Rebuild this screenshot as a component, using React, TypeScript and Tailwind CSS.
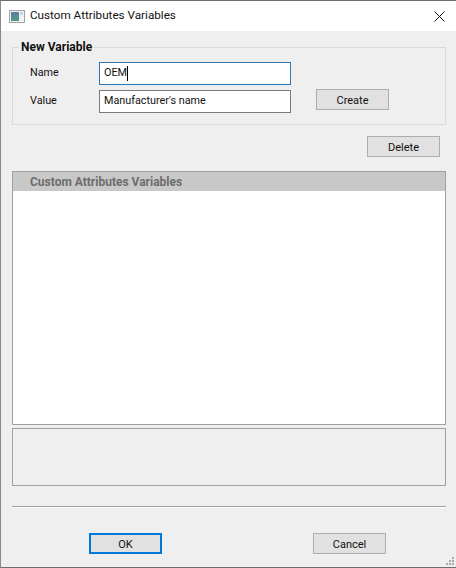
const font = "font-['Roboto','Noto_Sans',sans-serif]";

function Button({ label, primary, className = "" }: { label: string; primary?: boolean; className?: string }) {
  return (
    <button className={`w-[73px] h-[21px] flex items-center justify-center pt-[3px] bg-[#e1e1e1] text-[11px] text-[#111] ${primary ? "border-2 border-[#0078d7]" : "border border-[#adadad]"} ${className}`}>
      {label}
    </button>
  );
}

function Field({ label, value, focused }: { label: string; value: string; focused?: boolean }) {
  return (
    <div className="flex items-center h-[23px]">
      <span className="w-[69px] text-[10.8px] text-[#111]">{label}</span>
      <div className={`w-[192px] h-[23px] bg-white border flex items-center pl-[4px] pb-[1px] text-[10.8px] text-[#111] ${focused ? "border-[#2f77b1]" : "border-[#7a7a7a]"}`}>
        {value}
        {focused && <span className="w-px h-[15px] bg-black" />}
      </div>
    </div>
  );
}

function Grip() {
  const dots = [[6, 0], [3, 3], [6, 3], [0, 6], [3, 6], [6, 6]];
  return (
    <svg className="absolute right-[2px] bottom-[2px]" width="8" height="8">
      {dots.map(([x, y]) => (
        <rect key={`${x}-${y}`} x={x} y={y} width="2" height="2" fill="#a8a8a8" />
      ))}
    </svg>
  );
}

export default function App() {
  return (
    <div className={`${font} relative w-[456px] h-[568px] flex flex-col bg-[#efefef] border-t border-l border-b border-t-[#6f6f6f] border-l-[#8a8a8a] border-b-[#6f6f6f] overflow-hidden`}>
      <div className="h-[30px] bg-white flex items-center shrink-0">
        <svg className="ml-[8px]" width="16" height="13" viewBox="0 0 16 13">
          <defs>
            <linearGradient id="ico" x1="0" y1="0" x2="0" y2="1">
              <stop offset="0" stopColor="#5b7fa6" />
              <stop offset="1" stopColor="#4f9a85" />
            </linearGradient>
          </defs>
          <rect x="0.5" y="0.5" width="15" height="12" fill="#f2f2f2" stroke="#a3a3a3" />
          <rect x="2" y="2" width="8" height="9" fill="url(#ico)" />
          <rect x="11" y="2" width="3" height="3" fill="#c9d6cf" />
        </svg>
        <span className="ml-[5px] text-[11.7px] text-[#111]">Custom Attributes Variables</span>
        <svg className="ml-auto mr-[11px]" width="11" height="11" viewBox="0 0 11 11">
          <path d="M0.5 0.5L10.5 10.5M10.5 0.5L0.5 10.5" stroke="#111" strokeWidth="1" fill="none" />
        </svg>
      </div>

      <div className="flex-1 flex flex-col pl-[11px] w-[445px]">
        <div className="relative mt-[16px] h-[78px] border border-[#d9d9d9] pt-[14px] pl-[17px] flex shrink-0">
          <span className="absolute left-[6px] top-[-8px] bg-[#efefef] px-[2px] text-[12px] leading-[15px] font-bold text-[#111]">New Variable</span>
          <div className="flex flex-col gap-[5px]">
            <Field label="Name" value="OEM" focused />
            <Field label="Value" value="Manufacturer's name" />
          </div>
          <Button label="Create" className="ml-[25px] mt-[27px]" />
        </div>

        <div className="flex justify-end mt-[11px] pr-[6px]">
          <Button label="Delete" />
        </div>

        <div className="mt-[14px] h-[254px] border border-[#a0a0a0] bg-white shrink-0">
          <div className="h-[19px] bg-[#c8c8c8] pl-[17px] flex items-center text-[12px] font-bold text-[#6d6d6d]">
            Custom Attributes Variables
          </div>
        </div>

        <div className="mt-[3px] h-[58px] border border-[#a0a0a0] shrink-0" />

        <div className="mt-[20px] h-[2px] border-t border-t-[#a0a0a0] border-b border-b-white shrink-0" />

        <div className="flex mt-[25px] pl-[77px] gap-[151px]">
          <Button label="OK" primary />
          <Button label="Cancel" />
        </div>
      </div>
      <Grip />
    </div>
  );
}
